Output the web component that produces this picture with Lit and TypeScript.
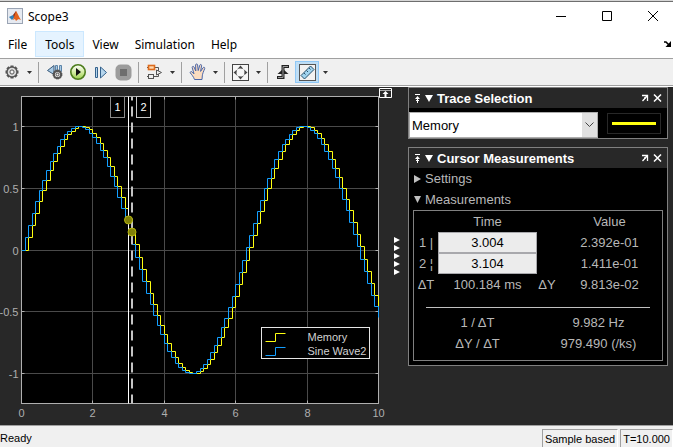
import { LitElement, html, svg, css } from "lit";
import { customElement, state } from "lit/decorators.js";

/** Readings shown in the cursor measurement table. */
const CURSORS = [
  { id: "1", mark: "1 |", time: "3.004", value: "2.392e-01" },
  { id: "2", mark: "2 ¦", time: "3.104", value: "1.411e-01" },
];

const X_TICKS = [0, 2, 4, 6, 8, 10];
const Y_TICKS = [1, 0.5, 0, -0.5, -1];
const Y_LIMIT = 1.243;
const MARGIN = { left: 21, top: 9, right: 14, bottom: 22 };

@customElement("scope-plot")
export class ScopePlot extends LitElement {
  static styles = css`
    :host {
      display: block;
      position: relative;
      min-width: 0;
      overflow: hidden;
      font: 11px "Liberation Sans", Arial, sans-serif;
    }
    .canvas {
      position: absolute;
      inset: 0;
      width: 100%;
      height: 100%;
      display: block;
    }
    .tick { fill: #afafaf; }
    .legend-text { fill: #d2d2d2; }
    .cursor-text { fill: #fff; }
    .dock {
      position: absolute;
      top: 1px;
      right: 0;
      padding: 0;
      border: 0;
      background: none;
      line-height: 0;
    }
  `;

  @state() private w = 392;
  @state() private h = 338;
  private observer = new ResizeObserver(([entry]) => {
    this.w = Math.round(entry.contentRect.width);
    this.h = Math.round(entry.contentRect.height);
  });

  connectedCallback() {
    super.connectedCallback();
    this.observer.observe(this);
  }

  disconnectedCallback() {
    super.disconnectedCallback();
    this.observer.disconnect();
  }

  private sx(t: number) {
    return MARGIN.left + (t / 10) * (this.w - MARGIN.left - MARGIN.right);
  }

  private sy(v: number) {
    const height = this.h - MARGIN.top - MARGIN.bottom;
    return MARGIN.top + height * (0.5 - v / (2 * Y_LIMIT));
  }

  /** Stair path of sin(t), sampled every 0.1 s and held, delayed by a number of samples. */
  private stairs(delay: number) {
    let d = "";
    for (let k = 0; k <= 100; k++) {
      const x = Math.round(this.sx(k / 10)) + 0.5;
      const y = Math.round(this.sy(Math.sin(Math.max(0, k - delay) / 10))) + 0.5;
      d += k === 0 ? `M${x} ${y}` : `H${x}V${y}`;
    }
    return d;
  }

  render() {
    const snap = (n: number) => Math.round(n) + 0.5;
    const x0 = snap(this.sx(0));
    const x1 = snap(this.sx(10));
    const y0 = snap(this.sy(Y_LIMIT));
    const y1 = snap(this.sy(-Y_LIMIT));
    const c1 = snap(this.sx(3.004));
    const c2 = Math.round(this.sx(3.104));
    const lx = x1 - 117;
    const ly = y1 - 76;
    return html`
      <svg class="canvas" role="img" aria-label="Memory and Sine Wave2 traces">
        <rect x=${x0} y=${y0} width=${x1 - x0} height=${y1 - y0} fill="#000" />
        ${X_TICKS.map((t) => {
          const x = snap(this.sx(t));
          return svg`
            <path d="M${x} ${y0}V${y1}" stroke="#4a4a4a" />
            <path d="M${x} ${y0}v3M${x} ${y1}v-3" stroke="#afafaf" />
            <text class="tick" x=${x} y=${y1 + 13} text-anchor="middle">${t}</text>`;
        })}
        ${Y_TICKS.map((v) => {
          const y = snap(this.sy(v));
          return svg`
            <path d="M${x0} ${y}H${x1}" stroke="#4a4a4a" />
            <path d="M${x0} ${y}h3M${x1} ${y}h-3" stroke="#afafaf" />
            <text class="tick" x=${x0 - 3} y=${y + 4} text-anchor="end">${v}</text>`;
        })}
        <rect x=${x0} y=${y0} width=${x1 - x0} height=${y1 - y0} fill="none" stroke="#afafaf" />
        <path d=${this.stairs(1)} fill="none" stroke="#ffff11" />
        <path d=${this.stairs(0)} fill="none" stroke="#139fff" />

        <path d="M${c1} ${y0}V${y1}" stroke="#fff" />
        <path d="M${c2} ${y0}V${y1}" stroke="#c4c4c4" stroke-width="2" stroke-dasharray="10 6" stroke-dashoffset="6" />
        <circle cx=${c1} cy=${this.sy(0.2392)} r="4" fill="#808009" stroke="#b4b40c" />
        <circle cx=${c2} cy=${this.sy(0.1411)} r="4" fill="#808009" stroke="#b4b40c" />
        <rect x=${c1 - 18} y=${y0} width="14" height="21" fill="#000" stroke="#8c8c8c" />
        <text class="cursor-text" x=${c1 - 11} y=${y0 + 14} text-anchor="middle">1</text>
        <rect x=${c1 + 8} y=${y0} width="14" height="21" fill="#000" stroke="#c8c8c8" />
        <text class="cursor-text" x=${c1 + 15} y=${y0 + 14} text-anchor="middle">2</text>

        <rect x=${lx} y=${ly} width="108" height="31" fill="#000" stroke="#e6e6e6" />
        <path d="M${lx + 4} ${ly + 14}h10v-8h10" fill="none" stroke="#ffff11" />
        <path d="M${lx + 4} ${ly + 28}h10v-8h10" fill="none" stroke="#139fff" />
        <text class="legend-text" x=${lx + 46} y=${ly + 13}>Memory</text>
        <text class="legend-text" x=${lx + 46} y=${ly + 27}>Sine Wave2</text>
      </svg>
      <button class="dock" aria-label="Maximize axes">
        <svg width="13" height="10">
          <path d="M.5 .5h12v9H.5z" fill="#282828" stroke="#fff" />
          <path d="M1 2.500h11" stroke="#aaa" />
          <path d="M6.500 3l3 3h-2v3h-2v-3h-2z" fill="#fff" />
        </svg>
      </button>
    `;
  }
}

@customElement("app-root")
export class AppRoot extends LitElement {
  static styles = css`
    :host {
      display: flex;
      flex-direction: column;
      min-height: 100vh;
      box-sizing: border-box;
      background: #fff;
      color: #000;
      font: 13px "Liberation Sans", Arial, sans-serif;
    }
    button { font: inherit; color: inherit; background: none; border: 0; padding: 0; margin: 0; }
    svg { display: block; }
    .behind { height: 1px; background: #d6d6d6; border-bottom: 1px solid #6e6e6e; }

    .titlebar { display: flex; align-items: center; height: 28px; padding-left: 7px; }
    .titlebar, .menu { font-family: "Noto Sans", "Open Sans", sans-serif; font-size: 12px; }
    .title { flex: 1; font-size: 12px; padding-left: 5px; }
    .window-btn { width: 46px; padding-left: 6px; box-sizing: border-box; display: grid; place-items: center; }

    .menu { display: flex; align-items: center; height: 28px; border-bottom: 1px solid #a0a0a0; }
    .menu-item { height: 26px; padding: 0 7px; border: 1px solid transparent; box-sizing: border-box; }
    .menu-item.hover { background: #e5f3ff; border-color: #cce8ff; padding: 0 9px; }
    .menu-dock { margin-left: auto; margin-right: 2px; }

    .toolbar { display: flex; align-items: center; height: 26px; background: #f0f0f0; border-bottom: 1px solid #a0a0a0; }
    .tool { width: 23px; height: 22px; display: grid; place-items: center; }
    .tool.on { background: #bfdef5; border: 1px solid #90c8f6; box-sizing: border-box; width: 24px; }
    .drop { width: 12px; height: 22px; display: grid; place-items: center; }
    .sep { width: 1px; height: 21px; background: #a0a0a0; margin: 0 4px 0 3px; }

    .body { flex: 1; display: flex; background: #282828; border-top: 1px solid #fff; min-height: 0; }
    scope-plot { flex: 1; }
    .splitter { width: 10px; padding-right: 6px; display: flex; flex-direction: column; align-items: center; justify-content: center; gap: 2px; }
    .side { width: 260px; padding-right: 5px; display: flex; flex-direction: column; gap: 8px; }

    .panel { border: 1px solid #808080; background: #000; color: #b8b8b8; }
    .panel-head { display: flex; align-items: center; height: 20px; gap: 4px; padding: 0 5px; background: #282828; color: #fff; }
    .panel-title { flex: 1; font-size: 13px; font-weight: bold; margin: 0; }
    .trace { display: flex; align-items: center; padding-top: 4px; }
    .picker { position: relative; width: 189px; height: 26px; }
    .select {
      appearance: none; width: 100%; height: 100%; border: 1px solid #adadad; border-radius: 0;
      background: #fff; color: #000; font: inherit; padding: 0 2px; display: block;
    }
    .chevron { position: absolute; top: 1px; right: 1px; bottom: 1px; width: 15px; background: #e1e1e1; display: grid; place-items: center; pointer-events: none; }
    .swatch { width: 52px; height: 19px; border: 1px solid #282828; margin-left: 9px; margin-bottom: 4px; display: grid; place-items: center; }
    .swatch-line { width: 44px; height: 3px; background: #ffff11; }

    .fold { display: flex; align-items: center; gap: 4px; height: 21px; padding-left: 5px; }
    .box { border: 1px solid #808080; margin: 0 4px 4px; padding-bottom: 6px; }
    .readings, .ratios { border-collapse: collapse; table-layout: fixed; width: 100%; }
    .readings td, .readings th, .ratios td, .ratios th { height: 21px; padding: 0; text-align: center; font-weight: normal; white-space: nowrap; }
    .c-mark { width: 24px; }
    .c-time { width: 99px; }
    .c-delta { width: 20px; }
    .time {
      display: block; width: 100%; height: 21px; box-sizing: border-box; border: 1px solid #a8a8ac; border-radius: 0;
      background: #ececec; color: #000; font: inherit; text-align: center; padding: 0;
    }
    .rule { height: 1px; border: 0; background: #c0c0c0; margin: 12px 12px 4px; }
    .ratio-wrap { padding: 0 3px; }

    .status { display: flex; align-items: stretch; height: 21px; background: #f0f0f0; border-top: 1px solid #a0a0a0; font-size: 11px; }
    .ready { flex: 1; align-self: center; padding-top: 2px; }
    .cell { margin: 3px 0 0 2px; border: 1px solid #a0a0a0; border-right-color: #fff; border-bottom: 0; padding: 0 2px; display: flex; align-items: center; }
  `;

  private drop(label: string) {
    return html`<button class="drop" aria-label=${label}>
      <svg width="5" height="3"><path d="M0 0h5L2.500 3z" fill="#333" /></svg>
    </button>`;
  }

  private gear(cx: number, cy: number, r: number) {
    const teeth = [0, 45, 90, 135, 180, 225, 270, 315];
    return svg`<g fill="#555">
      ${teeth.map((a) => svg`<rect x=${cx - 1.5} y=${cy - r - 1.5} width="3" height="4" transform="rotate(${a} ${cx} ${cy})" />`)}
      <circle cx=${cx} cy=${cy} r=${r} fill="#dcdcdc" stroke="#555" stroke-width="1.400" />
      <circle cx=${cx} cy=${cy} r=${r / 2.4} fill="#f4f4f4" stroke="#555" />
    </g>`;
  }

  private panelHead(title: string) {
    return html`<div class="panel-head">
      <button aria-label="Pin ${title}">
        <svg width="7" height="9"><path d="M1 .5h5M3.500 9V3M2 6.500h3" stroke="#fff" fill="none" /><path d="M3.500 2L6 5H1z" fill="#fff" /></svg>
      </button>
      <button aria-label="Collapse ${title}">
        <svg width="8" height="8"><path d="M0 1h8L4 8z" fill="#fff" /></svg>
      </button>
      <h2 class="panel-title">${title}</h2>
      <button aria-label="Undock ${title}">
        <svg width="8" height="8"><path d="M1 1.500h5.500V7M6 2L1.500 7M3 4h2" stroke="#fff" fill="none" stroke-width="1.300" /></svg>
      </button>
      <button aria-label="Close ${title}">
        <svg width="9" height="8"><path d="M1 .5l7 7M8 .5l-7 7" stroke="#fff" stroke-width="1.500" /></svg>
      </button>
    </div>`;
  }

  private toolbar() {
    return html`<div class="toolbar" role="toolbar">
      <button class="tool" aria-label="Configuration">
        <svg width="16" height="16">${this.gear(8, 8, 5)}</svg>
      </button>
      ${this.drop("More configuration")}
      <span class="sep"></span>
      <button class="tool" aria-label="Step back options">
        <svg width="16" height="16">
          <path d="M.5 6.500l6.500-5v9z" fill="#a9cbe6" stroke="#38597a" />
          <path d="M8.500 1.500h2v6h-2zM12.500 1.500h2v6h-2z" fill="#a9cbe6" stroke="#5c84a8" />
          ${this.gear(10.5, 10.5, 3.3)}
        </svg>
      </button>
      <button class="tool" aria-label="Run">
        <svg width="18" height="18">
          <defs><linearGradient id="run" x2="0" y2="1"><stop offset="0" stop-color="#fff" /><stop offset=".5" stop-color="#d4eda4" /><stop offset="1" stop-color="#9ccf4c" /></linearGradient></defs>
          <circle cx="9" cy="9" r="7.200" fill="url(#run)" stroke="#4d7d1c" stroke-width="1.600" />
          <path d="M7 5l5 4-5 4z" fill="#111" />
        </svg>
      </button>
      <button class="tool" aria-label="Step forward">
        <svg width="16" height="16">
          <path d="M2.500 3.500h2v10h-2zM7.500 3l6 5.500-6 5.500z" fill="#b5d5ec" stroke="#34618c" />
        </svg>
      </button>
      <button class="tool" aria-label="Stop" disabled>
        <svg width="17" height="17"><rect x=".5" y=".5" width="16" height="16" rx="5" fill="#9c9c9c" /><rect x="5" y="5" width="7" height="7" fill="#6e6e6e" /></svg>
      </button>
      <span class="sep"></span>
      <button class="tool" aria-label="Highlight block">
        <svg width="17" height="17">
          <path d="M9 3.500h3.500V7M1 12.500h2M8 12.500h4.500V10M1 3.500h2" stroke="#555" fill="none" />
          <rect x="2.500" y="1.500" width="6" height="4" fill="#ffd9b0" stroke="#dd6b1d" stroke-width="1.600" />
          <rect x="2.500" y="10.500" width="5" height="4" fill="#eee" stroke="#555" />
          <path d="M10.500 6l5 2.500-5 2.500z" fill="#eee" stroke="#555" />
        </svg>
      </button>
      ${this.drop("More highlight options")}
      <span class="sep"></span>
      <button class="tool" aria-label="Pan">
        <svg width="18" height="18"><path d="M5.500 16.500c-1-3-3-5-4.200-6.600-.5-1 .8-1.800 1.700-1l2 2L3.200 4.600c-.3-1.300 1.300-1.800 1.800-.6l1.800 4L6.600 2c0-1.300 1.800-1.400 2-.1l.6 5.700L10.800 2.200c.4-1.200 2-.8 1.800.5l-1 5.700 2.500-3.700c.7-1 2.100-.2 1.600 1-1.200 2.800-2.200 5-2.400 7.200l-.3 3.600z" fill="#fbdcc0" stroke="#4a66a8" /></svg>
      </button>
      ${this.drop("More pan options")}
      <span class="sep"></span>
      <button class="tool" aria-label="Scale axes">
        <svg width="17" height="17">
          <rect x=".5" y=".5" width="16" height="16" fill="#f6f6f6" stroke="#444" />
          <circle cx="8.500" cy="8.500" r="4.500" fill="none" stroke="#777" stroke-dasharray="2 1.500" />
          <path d="M8.500 1.500l2.500 3H6zM8.500 15.500l2.500-3H6zM1.500 8.500l3-2.500v5zM15.500 8.500l-3-2.500v5z" fill="#444" />
        </svg>
      </button>
      ${this.drop("More scale options")}
      <span class="sep"></span>
      <button class="tool" aria-label="Trigger">
        <svg width="15" height="16"><path d="M1 13.500h6v-11h6" fill="none" stroke="#222" stroke-width="3" /><path d="M1.500 10l5.500-5 5.500 5z" fill="#222" /><path d="M2 13.500h5v-11h5" fill="none" stroke="#999" /></svg>
      </button>
      <button class="tool on" aria-label="Cursor measurements" aria-pressed="true">
        <svg width="17" height="17">
          <rect x=".5" y=".5" width="16" height="16" fill="#f2f2f2" stroke="#555" />
          <path d="M2 11.500L11.500 2 15 5.500 5.500 15z" fill="#9fd3ef" stroke="#27506b" />
          <path d="M5 9l1.500 1.500M7.500 6.500L9 8M10 4l1.500 1.500" stroke="#27506b" />
        </svg>
      </button>
      ${this.drop("More measurements")}
    </div>`;
  }

  render() {
    return html`
      <div class="behind"></div>
      <header class="titlebar">
        <svg width="16" height="16">
          <rect x=".5" y=".5" width="15" height="15" fill="#e6eaf1" stroke="#9aa4b4" />
          <path d="M2 9l4-2 2 2-3 3z" fill="#2f7fb8" />
          <path d="M6 7l3-4 1 5-2 3z" fill="#8a2a12" />
          <path d="M9 3c1 1 3 6 5 9-2-1-3-1-5 1l-1-2-2 1z" fill="#e2611c" />
        </svg>
        <span class="title">Scope3</span>
        <button class="window-btn" aria-label="Minimize"><svg width="10" height="10"><path d="M0 5.500h10" stroke="#000" /></svg></button>
        <button class="window-btn" aria-label="Maximize"><svg width="10" height="10"><path d="M.5 .5h9v9h-9z" fill="none" stroke="#000" /></svg></button>
        <button class="window-btn" aria-label="Close"><svg width="10" height="10"><path d="M0 0l10 10M10 0L0 10" stroke="#000" /></svg></button>
      </header>
      <nav class="menu">
        ${["File", "Tools", "View", "Simulation", "Help"].map(
          (m) => html`<button class="menu-item ${m === "Tools" ? "hover" : ""}">${m}</button>`
        )}
        <button class="menu-dock" aria-label="Dock window">
          <svg width="7" height="6"><path d="M0 1h2l3 3" stroke="#000" stroke-width="1.500" fill="none" /><path d="M7 0v6H1.500z" fill="#000" /></svg>
        </button>
      </nav>
      ${this.toolbar()}
      <main class="body">
        <scope-plot></scope-plot>
        <div class="splitter">
          ${[0, 1, 2, 3, 4].map(() => html`<svg width="6" height="6"><path d="M0 0l6 3-6 3z" fill="#fff" /></svg>`)}
        </div>
        <aside class="side">
          <section class="panel">
            ${this.panelHead("Trace Selection")}
            <div class="trace">
              <div class="picker">
                <select class="select" aria-label="Trace"><option>Memory</option><option>Sine Wave2</option></select>
                <span class="chevron"><svg width="9" height="6"><path d="M.5 .5l4 4 4-4" fill="none" stroke="#444" /></svg></span>
              </div>
              <div class="swatch"><div class="swatch-line"></div></div>
            </div>
          </section>
          <section class="panel">
            ${this.panelHead("Cursor Measurements")}
            <button class="fold"><svg width="7" height="8"><path d="M0 0l7 4-7 4z" fill="#c0c0c0" /></svg>Settings</button>
            <button class="fold"><svg width="7" height="7"><path d="M0 0h7L3.500 7z" fill="#c0c0c0" /></svg>Measurements</button>
            <div class="box">
              <table class="readings">
                <colgroup><col class="c-mark" /><col class="c-time" /><col class="c-delta" /><col /></colgroup>
                <tr><td></td><th scope="col">Time</th><td></td><th scope="col">Value</th></tr>
                ${CURSORS.map(
                  (c) => html`<tr>
                    <th scope="row"><label for="cursor-${c.id}">${c.mark}</label></th>
                    <td><input class="time" id="cursor-${c.id}" .value=${c.time} /></td>
                    <td></td>
                    <td>${c.value}</td>
                  </tr>`
                )}
                <tr><th scope="row">ΔT</th><td>100.184 ms</td><th scope="row">ΔY</th><td>9.813e-02</td></tr>
              </table>
              <hr class="rule" />
              <div class="ratio-wrap">
                <table class="ratios">
                  <tr><th scope="row">1 / ΔT</th><td>9.982 Hz</td></tr>
                  <tr><th scope="row">ΔY / ΔT</th><td>979.490 (/ks)</td></tr>
                </table>
              </div>
            </div>
          </section>
        </aside>
      </main>
      <footer class="status">
        <span class="ready">Ready</span>
        <span class="cell">Sample based</span>
        <span class="cell">T=10.000</span>
      </footer>
    `;
  }
}
